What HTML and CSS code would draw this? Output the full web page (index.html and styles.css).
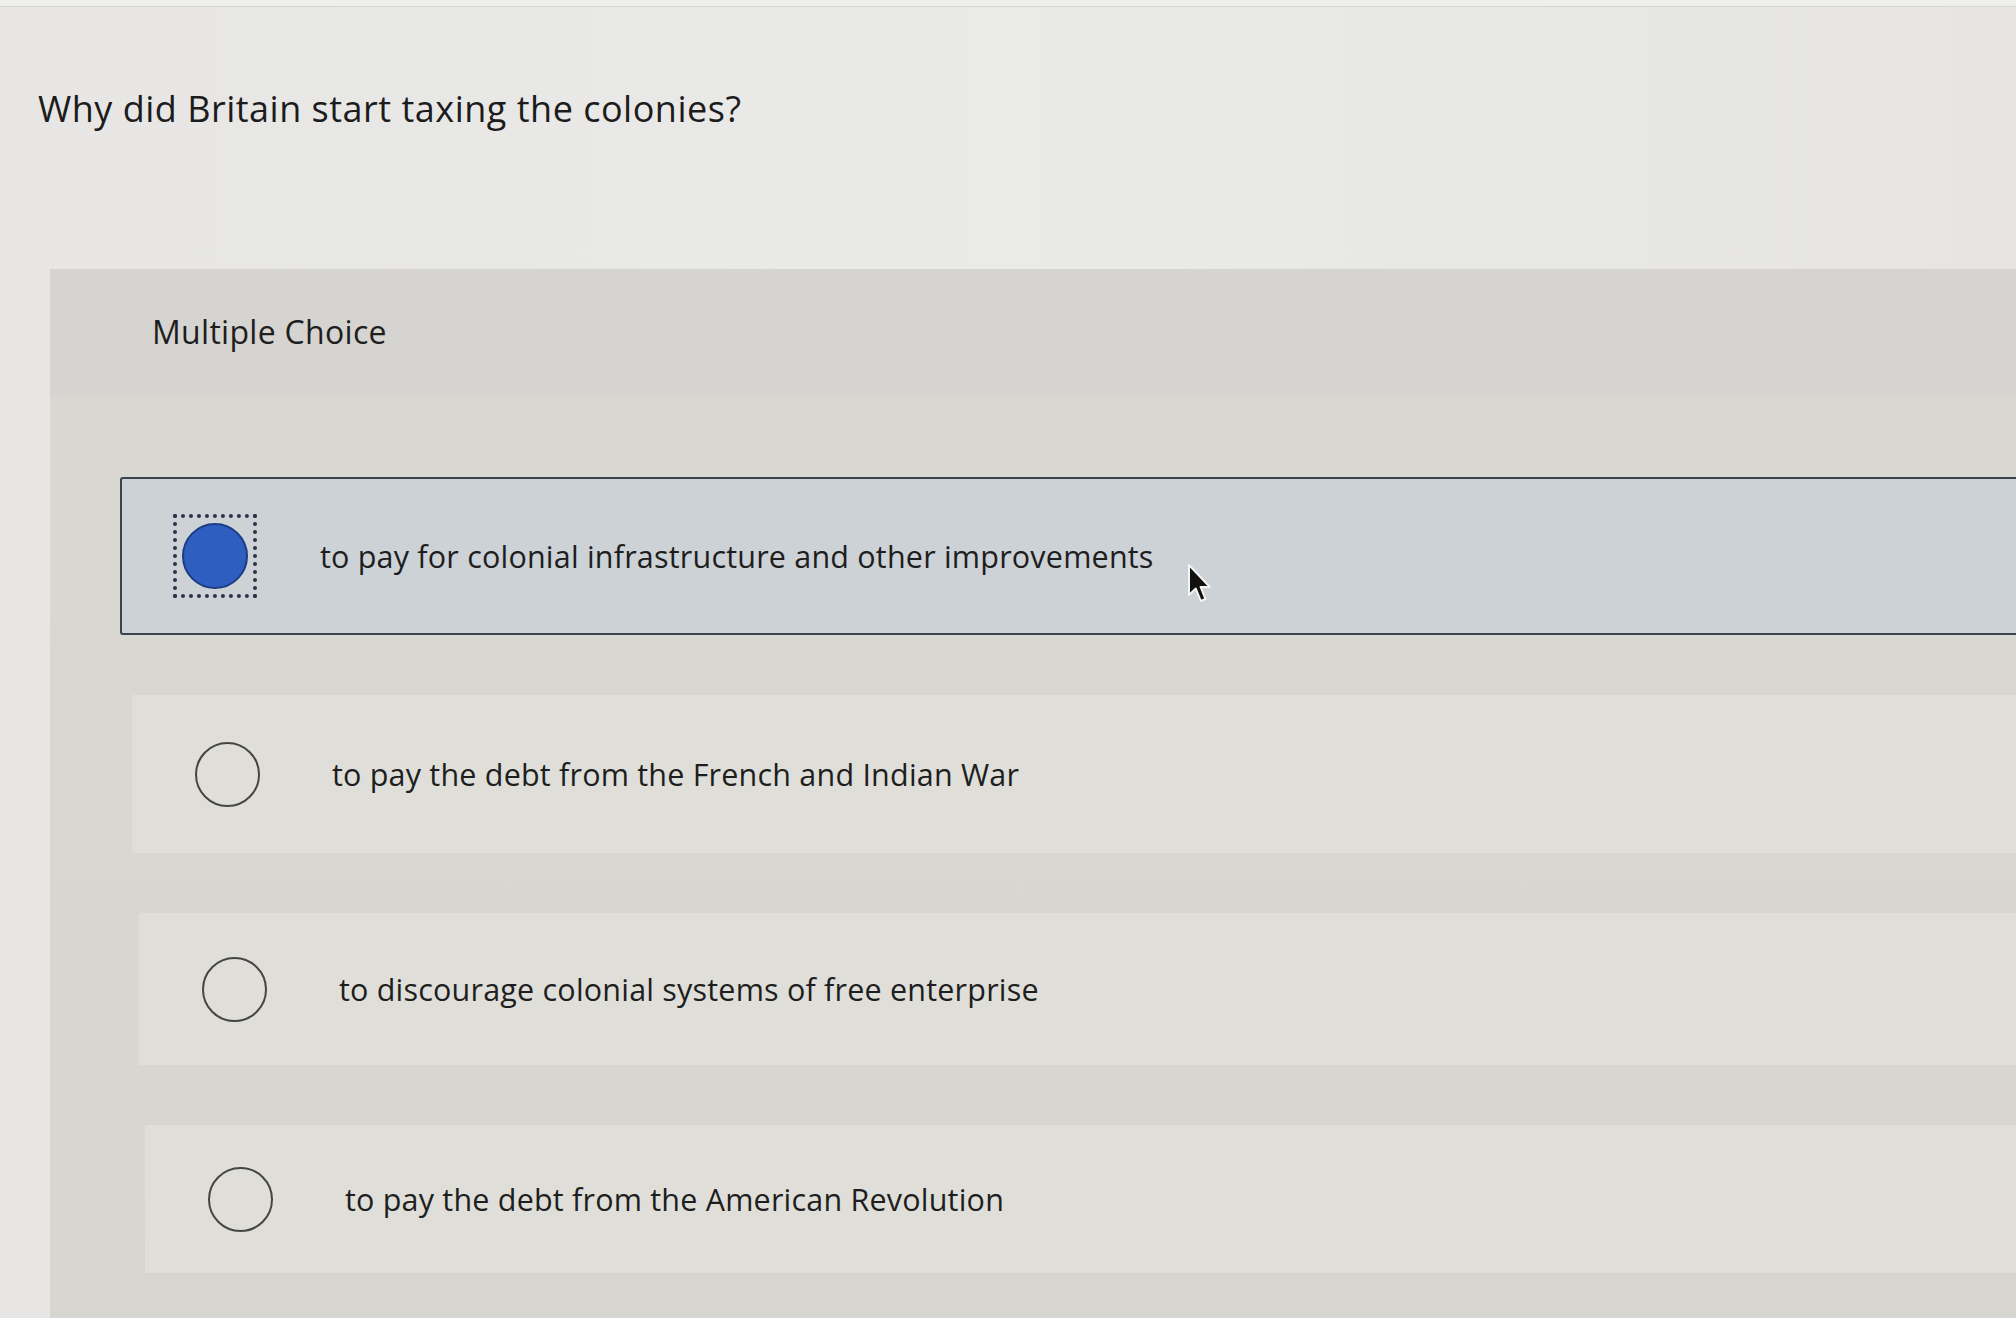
FILE: index.html
```html
<!DOCTYPE html>
<html lang="en">
<head>
<meta charset="utf-8">
<title>Multiple Choice</title>
<link rel="stylesheet" href="styles.css">
</head>
<body>
<div class="topbar"></div>
<h1 class="question">Why did Britain start taxing the colonies?</h1>
<section class="panel">
  <header class="panel-head">Multiple Choice</header>
  <div class="choices">
    <div class="choice selected">
      <span class="radio-slot"><span class="radio"></span></span>
      <span class="choice-text">to pay for colonial infrastructure and other improvements</span>
      <svg class="cursor" width="26" height="42" viewBox="0 0 13 21">
        <path d="M1 1 L1 16 L4.4 12.8 L6.9 19 L9.2 18 L6.8 12 L11.4 12 Z" fill="#111" stroke="#f4f4f4" stroke-width="1" stroke-linejoin="round"/>
      </svg>
    </div>
    <div class="choice">
      <span class="radio-slot"><span class="radio"></span></span>
      <span class="choice-text">to pay the debt from the French and Indian War</span>
    </div>
    <div class="choice">
      <span class="radio-slot"><span class="radio"></span></span>
      <span class="choice-text">to discourage colonial systems of free enterprise</span>
    </div>
    <div class="choice">
      <span class="radio-slot"><span class="radio"></span></span>
      <span class="choice-text">to pay the debt from the American Revolution</span>
    </div>
  </div>
</section>
</body>
</html>
```
FILE: styles.css
```css
html, body {
  margin: 0;
  padding: 0;
  height: 100%;
}
body {
  background: linear-gradient(90deg, #e7e6e4 0%, #eaeae8 50%, #e6e5e2 100%);
  font-family: "Open Sans", "Noto Sans", "Liberation Sans", sans-serif;
  color: #1f1f1f;
  overflow: hidden;
}
.topbar {
  height: 6px;
  background: #efefed;
  border-bottom: 1px solid #d6d6d4;
}
.question {
  margin: 82px 0 0 38px;
  font-size: 36px;
  line-height: 40px;
  font-weight: 400;
  letter-spacing: 0.5px;
  color: #1c1c1c;
}
.panel {
  margin: 140px -40px 0 50px;
  background: linear-gradient(180deg, #d9d8d3 0%, #d6d5d0 100%);
  min-height: 1100px;
}
.panel-head {
  height: 127px;
  box-sizing: border-box;
  padding: 44px 0 0 102px;
  font-size: 32px;
  line-height: 38px;
  letter-spacing: 0.3px;
  background: #d5d4d0;
  color: #1e1e1e;
}
.choices {
  display: flex;
  flex-direction: column;
  gap: 60px;
  padding: 81px 0 0 75px;
}
.choice {
  position: relative;
  display: flex;
  align-items: center;
  height: 158px;
  box-sizing: border-box;
  background: #dfded9;
  padding-left: 53px;
}
.choice:nth-child(2) {
  margin-left: 7px;
}
.choice:nth-child(3) {
  height: 152px;
  margin-left: 14px;
}
.choice:nth-child(4) {
  height: 148px;
  margin-left: 20px;
}
.choice.selected {
  margin-left: -5px;
  background: #ccd2d6;
  border: 2px solid #3b4250;
  border-right: none;
  border-radius: 3px 0 0 3px;
  padding-left: 51px;
}
.radio-slot {
  width: 84px;
  height: 84px;
  display: flex;
  align-items: center;
  justify-content: center;
  box-sizing: border-box;
  flex: none;
}
.selected .radio-slot {
  border: 4px dotted #2a3448;
}
.radio {
  width: 65px;
  height: 65px;
  border-radius: 50%;
  border: 2px solid #454545;
  box-sizing: border-box;
  background: transparent;
}
.selected .radio {
  width: 66px;
  height: 66px;
  background: #2e5fc0;
  border: 2px solid #1c3c86;
}
.choice-text {
  margin-left: 63px;
  font-size: 30.5px;
  line-height: 36px;
  letter-spacing: 0.2px;
  color: #1e1e1e;
}
.cursor {
  position: absolute;
  left: 1065px;
  top: 84px;
}
```
